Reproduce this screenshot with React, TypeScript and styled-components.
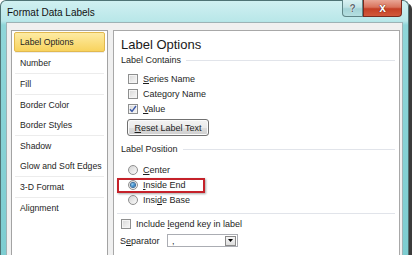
import React from "react";
import styled, { createGlobalStyle } from "styled-components";

const GlobalStyle = createGlobalStyle`
  html, body {
    margin: 0;
    padding: 0;
    background: #ffffff;
  }
  body {
    font-family: "Liberation Sans", Arial, sans-serif;
    color: #1e1e1e;
  }
`;

const Window = styled.div`
  box-sizing: border-box;
  width: 409px;
  height: 255px;
  border: 1px solid #4f7375;
  border-bottom: none;
  border-radius: 6px 6px 0 0;
  background: linear-gradient(180deg, #d0f0f1 0px, #b9e7e9 20px, #8fd6d9 24px, #7dcdd1 100%);
  box-shadow: 3px 3px 0 #3b3b3b;
  display: flex;
  flex-direction: column;
  padding: 0 5px;
`;

const TitleBar = styled.div`
  height: 21px;
  display: flex;
  align-items: flex-start;
  justify-content: space-between;
`;

const Title = styled.div`
  margin: 6px 0 0 1px;
  font-size: 10px;
  line-height: 12px;
  color: #111;
`;

const CaptionButtons = styled.div`
  display: flex;
  margin-right: 1px;
  margin-top: -1px;
`;

const CaptionButton = styled.div<{ $close?: boolean }>`
  box-sizing: border-box;
  width: ${(p) => (p.$close ? 39 : 21)}px;
  height: 17px;
  border: 1px solid ${(p) => (p.$close ? "#7a2a1e" : "#5f8587")};
  border-top: none;
  border-radius: ${(p) => (p.$close ? "0 0 4px 0" : "0 0 0 4px")};
  background: ${(p) =>
    p.$close
      ? "linear-gradient(180deg, #e9a696 0%, #d9735c 45%, #c43f25 55%, #d2593b 100%)"
      : "linear-gradient(180deg, #d9f1f2 0%, #bfe2e4 45%, #a3d3d6 55%, #b5dfe1 100%)"};
  display: flex;
  align-items: center;
  justify-content: center;
  font-weight: bold;
  font-size: ${(p) => (p.$close ? 12 : 10)}px;
  color: ${(p) => (p.$close ? "#ffffff" : "#5a6a70")};
  text-shadow: ${(p) =>
    p.$close
      ? "0 0 1px #5a1a10, 0 0 1px #5a1a10"
      : "0 0 1px #ffffff, 0 0 1px #ffffff"};
`;

const Client = styled.div`
  flex: 1;
  min-height: 0;
  background: #f0f0f0;
  border: 1px solid #9db2b5;
  border-bottom: none;
  display: flex;
  gap: 5px;
  padding: 7px 2px 0 4px;
`;

const NavList = styled.div`
  box-sizing: border-box;
  width: 97px;
  background: #ffffff;
  border: 1px solid #a3a3a3;
  border-bottom: none;
  padding: 1px;
  display: flex;
  flex-direction: column;
`;

const NavItem = styled.div<{ $active?: boolean }>`
  box-sizing: border-box;
  height: 20px;
  margin: 0 1px;
  padding-left: 5px;
  display: flex;
  align-items: center;
  font-size: 8.7px;
  white-space: nowrap;
  border-radius: 2px;
  border: 1px solid ${(p) => (p.$active ? "#e2b94e" : "transparent")};
  background: ${(p) =>
    p.$active ? "linear-gradient(180deg, #fdeba4 0%, #fbdf80 50%, #f8d35e 100%)" : "transparent"};
`;

const NavSep = styled.div`
  height: 1px;
  margin: 0 2px;
  background: #ececec;
`;

const Pane = styled.div`
  flex: 1;
  position: relative;
  background: #ffffff;
  border: 1px solid #a8a8a8;
  border-bottom: none;
  padding: 0 4px 0 7px;
  display: flex;
  flex-direction: column;
`;

const Heading = styled.div`
  margin-top: 6px;
  height: 16px;
  font-size: 13px;
  line-height: 16px;
  color: #1a1a1a;
`;

const Section = styled.div<{ $mt: number }>`
  margin-top: ${(p) => p.$mt}px;
  height: 12px;
  display: flex;
  align-items: center;
  gap: 5px;
  font-size: 9px;
  white-space: nowrap;
  &::after {
    content: "";
    flex: 1;
    height: 1px;
    background: #e1e4ea;
  }
`;

const Group = styled.div<{ $mt: number }>`
  margin-top: ${(p) => p.$mt}px;
  display: flex;
  flex-direction: column;
`;

const OptionRow = styled.div<{ $indent?: number }>`
  height: 15px;
  display: flex;
  align-items: center;
  gap: 5px;
  padding-left: ${(p) => p.$indent ?? 7}px;
  font-size: 9px;
  white-space: nowrap;
`;

const Box = styled.div`
  box-sizing: border-box;
  width: 10px;
  height: 10px;
  border: 1px solid #8e8f8f;
  background: linear-gradient(135deg, #d6d6d6 0%, #ececec 60%, #f6f6f6 100%);
  box-shadow: inset 0 0 0 1px #f4f4f4;
  display: flex;
  align-items: center;
  justify-content: center;
`;

const Radio = styled.div<{ $on?: boolean }>`
  box-sizing: border-box;
  width: 10px;
  height: 10px;
  border-radius: 50%;
  border: 1px solid #8f8f8f;
  background: linear-gradient(135deg, #d4d4d4 0%, #efefef 70%, #fafafa 100%);
  display: flex;
  align-items: center;
  justify-content: center;
  &::after {
    content: "";
    display: ${(p) => (p.$on ? "block" : "none")};
    width: 4px;
    height: 4px;
    border-radius: 50%;
    background: radial-gradient(circle at 35% 35%, #8fd0f5 0%, #2b7fc4 60%, #174f86 100%);
    box-shadow: 0 0 0 1px #3a6d9c;
  }
`;

const Key = styled.span`
  text-decoration: underline;
  text-underline-offset: 1px;
`;

const PushButton = styled.div`
  box-sizing: border-box;
  margin: 3px 0 0 6px;
  width: 82px;
  height: 17px;
  border: 1px solid #707070;
  border-radius: 3px;
  background: linear-gradient(180deg, #f3f3f3 0%, #ebebeb 50%, #dddddd 51%, #cfcfcf 100%);
  box-shadow: inset 0 0 0 1px #fbfbfb;
  display: flex;
  align-items: center;
  justify-content: center;
  font-size: 9px;
`;

const Divider = styled.div`
  margin: 6px 0 0 -4px;
  height: 1px;
  background: #e1e4ea;
`;

const Highlight = styled.div`
  position: absolute;
  left: 3px;
  top: 147px;
  width: 88px;
  height: 15px;
  box-sizing: border-box;
  border: 2px solid #c5222a;
  box-shadow: 1px 1px 2px rgba(0, 0, 0, 0.35);
  pointer-events: none;
`;

const FieldRow = styled.div`
  margin-top: 2px;
  height: 15px;
  display: flex;
  align-items: center;
  font-size: 9px;
`;

const FieldLabel = styled.div`
  width: 47px;
  margin-left: -1px;
`;

const Combo = styled.div`
  box-sizing: border-box;
  width: 71px;
  height: 13px;
  border: 1px solid #abadb3;
  background: #ffffff;
  display: flex;
  align-items: center;
  justify-content: space-between;
  padding: 0 1px 0 4px;
  font-size: 9px;
`;

const DropButton = styled.div`
  box-sizing: border-box;
  width: 11px;
  height: 10px;
  border: 1px solid #8a8a8a;
  background: linear-gradient(180deg, #f6f6f6 0%, #dedede 100%);
  display: flex;
  align-items: center;
  justify-content: center;
`;

const navGroups = [
  ["Label Options"],
  ["Number"],
  ["Fill"],
  ["Border Color", "Border Styles"],
  ["Shadow", "Glow and Soft Edges"],
  ["3-D Format"],
  ["Alignment"],
];

const Check = () => (
  <svg width="8" height="8" viewBox="0 0 8 8">
    <path d="M1 4.2 L3 6.5 L7 1" fill="none" stroke="#3b58a8" strokeWidth="1.4" />
  </svg>
);

const App: React.FC = () => {
  return (
    <>
      <GlobalStyle />
      <Window>
        <TitleBar>
          <Title>Format Data Labels</Title>
          <CaptionButtons>
            <CaptionButton>?</CaptionButton>
            <CaptionButton $close>x</CaptionButton>
          </CaptionButtons>
        </TitleBar>
        <Client>
          <NavList>
            {navGroups.map((group, gi) => (
              <React.Fragment key={gi}>
                {gi > 0 && <NavSep />}
                {group.map((label) => (
                  <NavItem key={label} $active={label === "Label Options"}>
                    {label}
                  </NavItem>
                ))}
              </React.Fragment>
            ))}
          </NavList>
          <Pane>
            <Heading>Label Options</Heading>
            <Section $mt={1}>Label Contains</Section>
            <Group $mt={5}>
              <OptionRow>
                <Box />
                <span>
                  <Key>S</Key>eries Name
                </span>
              </OptionRow>
              <OptionRow>
                <Box />
                <span>Category Name</span>
              </OptionRow>
              <OptionRow>
                <Box>
                  <Check />
                </Box>
                <span>
                  <Key>V</Key>alue
                </span>
              </OptionRow>
            </Group>
            <PushButton>
              <span>
                <Key>R</Key>eset Label Text
              </span>
            </PushButton>
            <Section $mt={7}>Label Position</Section>
            <Group $mt={7}>
              <OptionRow>
                <Radio />
                <span>
                  <Key>C</Key>enter
                </span>
              </OptionRow>
              <OptionRow>
                <Radio $on />
                <span>
                  <Key>I</Key>nside End
                </span>
              </OptionRow>
              <OptionRow>
                <Radio />
                <span>
                  Insi<Key>d</Key>e Base
                </span>
              </OptionRow>
            </Group>
            <Divider />
            <Group $mt={2}>
              <OptionRow $indent={-1}>
                <Box />
                <span>
                  Include <Key>l</Key>egend key in label
                </span>
              </OptionRow>
            </Group>
            <FieldRow>
              <FieldLabel>
                S<Key>e</Key>parator
              </FieldLabel>
              <Combo>
                <span>,</span>
                <DropButton>
                  <svg width="5" height="3" viewBox="0 0 5 3">
                    <path d="M0 0 H5 L2.5 3 Z" fill="#000" />
                  </svg>
                </DropButton>
              </Combo>
            </FieldRow>
            <Highlight />
          </Pane>
        </Client>
      </Window>
    </>
  );
};

export default App;
